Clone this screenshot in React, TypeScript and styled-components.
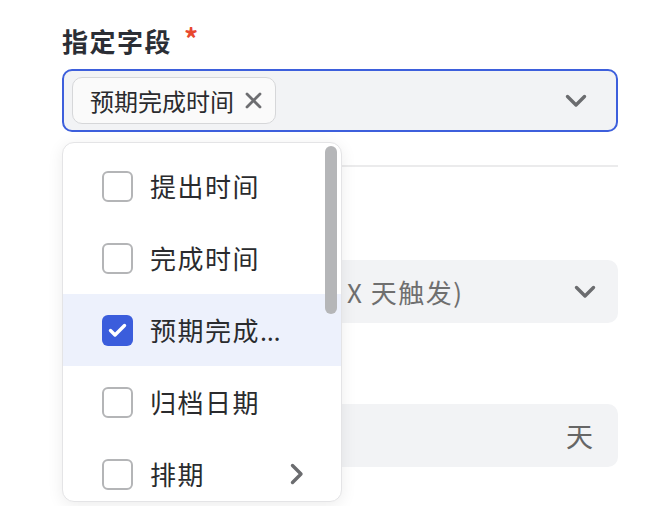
import React from "react";
import styled, { createGlobalStyle } from "styled-components";

const Global = createGlobalStyle`
  html, body { margin: 0; padding: 0; background: #ffffff; }
  body { font-family: "Noto Sans CJK SC", "Noto Sans", sans-serif; }
  * { box-sizing: border-box; }
`;

const Page = styled.div`
  position: relative;
  width: 670px;
  height: 506px;
  overflow: hidden;
  padding: 23px 52px 0 62px;
`;

const Label = styled.div<{ $top?: number }>`
  margin-top: ${(p) => p.$top ?? 0}px;
  height: 35px;
  font-size: 26px;
  line-height: 35px;
  font-weight: 700;
  letter-spacing: 1.5px;
  color: #2b2e35;
  display: flex;
  align-items: center;
  gap: 12px;
`;

const Star = styled.span`
  color: #e8482f;
  font-size: 28px;
  font-weight: 700;
  line-height: 1;
  transform: translateY(-3px);
`;

const Field = styled.div<{ $focused?: boolean; $pl: number; $pr: number }>`
  margin-top: 11px;
  height: 63px;
  border-radius: 10px;
  background: #f2f3f5;
  border: ${(p) => (p.$focused ? "2px solid #3d5fdc" : "none")};
  display: flex;
  align-items: center;
  padding: 0 ${(p) => p.$pr}px 0 ${(p) => p.$pl}px;
  font-size: 26px;
  letter-spacing: 1.5px;
  color: #6f6f6f;
`;

const Tag = styled.div`
  display: inline-flex;
  height: 47px;
  border-radius: 10px;
  border: 1.5px solid #d6d7d9;
  background: #fafafa;
  align-items: center;
  gap: 11px;
  padding: 0 13px 0 17px;
  font-size: 24px;
  letter-spacing: 0;
  color: #2a2b2e;
`;

const Grow = styled.div`
  flex: 1;
  white-space: nowrap;
  overflow: hidden;
`;

const Divider = styled.div`
  margin-top: 33px;
  height: 2px;
  background: #ebebec;
`;

const Suffix = styled.span`
  color: #666;
  font-size: 27px;
  letter-spacing: 0;
`;

const Dropdown = styled.div`
  position: absolute;
  left: 62px;
  top: 142px;
  width: 280px;
  height: 360px;
  background: #fff;
  border: 1px solid #e4e4e6;
  border-radius: 12px;
  box-shadow: 0 3px 16px rgba(0, 0, 0, 0.08);
  overflow: hidden;
  padding-top: 7px;
`;

const Scrollbar = styled.div`
  position: absolute;
  right: 4px;
  top: 3px;
  width: 12px;
  height: 168px;
  border-radius: 6px;
  background: #b5b6b8;
`;

const Item = styled.div<{ $active?: boolean }>`
  height: 72px;
  display: flex;
  align-items: center;
  padding: 0 40px 0 39px;
  background: ${(p) => (p.$active ? "#edf1fc" : "transparent")};
  font-family: "Noto Sans", "Noto Sans CJK SC", sans-serif;
  font-size: 26px;
  letter-spacing: 1.5px;
  color: #2a2b2e;
`;

const Box = styled.div<{ $checked?: boolean }>`
  width: 31px;
  height: 31px;
  flex: none;
  border-radius: 6px;
  border: ${(p) => (p.$checked ? "none" : "2px solid #b4b5b7")};
  background: ${(p) => (p.$checked ? "#3b5ddc" : "#fff")};
  display: flex;
  align-items: center;
  justify-content: center;
`;

const ItemText = styled.span`
  margin-left: 17px;
  width: 140px;
  flex: none;
  white-space: nowrap;
  overflow: hidden;
  text-overflow: ellipsis;
`;

const SubArrow = styled.span`
  margin-left: auto;
  display: flex;
`;

const Chevron = ({ dir = "down" }: { dir?: "down" | "right" }) =>
  dir === "down" ? (
    <svg width="22" height="14" viewBox="0 0 22 14" fill="none">
      <path d="M2.5 2.5 L11 11 L19.5 2.5" stroke="#6b6c6f" strokeWidth="3.4" strokeLinecap="round" strokeLinejoin="round" />
    </svg>
  ) : (
    <svg width="14" height="22" viewBox="0 0 14 22" fill="none">
      <path d="M2.5 2.5 L11 11 L2.5 19.5" stroke="#6b6c6f" strokeWidth="3.4" strokeLinecap="round" strokeLinejoin="round" />
    </svg>
  );

const Close = () => (
  <svg width="17" height="17" viewBox="0 0 17 17" fill="none">
    <path d="M2 2 L15 15 M15 2 L2 15" stroke="#6d6e71" strokeWidth="2.8" strokeLinecap="round" />
  </svg>
);

const Check = () => (
  <svg width="19" height="15" viewBox="0 0 19 15" fill="none">
    <path d="M2.5 7.5 L7 12 L16.5 2.5" stroke="#fff" strokeWidth="3.4" strokeLinecap="round" strokeLinejoin="round" />
  </svg>
);

const options = [
  { label: "提出时间", checked: false },
  { label: "完成时间", checked: false },
  { label: "预期完成时间", checked: true },
  { label: "归档日期", checked: false },
  { label: "排期", checked: false, sub: true },
];

export default function App() {
  return (
    <>
      <Global />
      <Page>
        <Label>
          指定字段<Star>*</Star>
        </Label>
        <Field $focused $pl={8} $pr={29}>
          <Grow>
            <Tag>
              预期完成时间
              <Close />
            </Tag>
          </Grow>
          <Chevron />
        </Field>
        <Divider />
        <Label $top={47}>触发时间</Label>
        <Field $pl={20} $pr={22}>
          <Grow>字段时间到期前(提前 X 天触发)</Grow>
          <Chevron />
        </Field>
        <Label $top={35}>提前天数</Label>
        <Field $pl={20} $pr={25}>
          <Grow />
          <Suffix>天</Suffix>
        </Field>

        <Dropdown>
          {options.map((o) => (
            <Item key={o.label} $active={o.checked}>
              <Box $checked={o.checked}>{o.checked && <Check />}</Box>
              <ItemText>{o.label}</ItemText>
              {o.sub && (
                <SubArrow>
                  <Chevron dir="right" />
                </SubArrow>
              )}
            </Item>
          ))}
          <Scrollbar />
        </Dropdown>
      </Page>
    </>
  );
}
